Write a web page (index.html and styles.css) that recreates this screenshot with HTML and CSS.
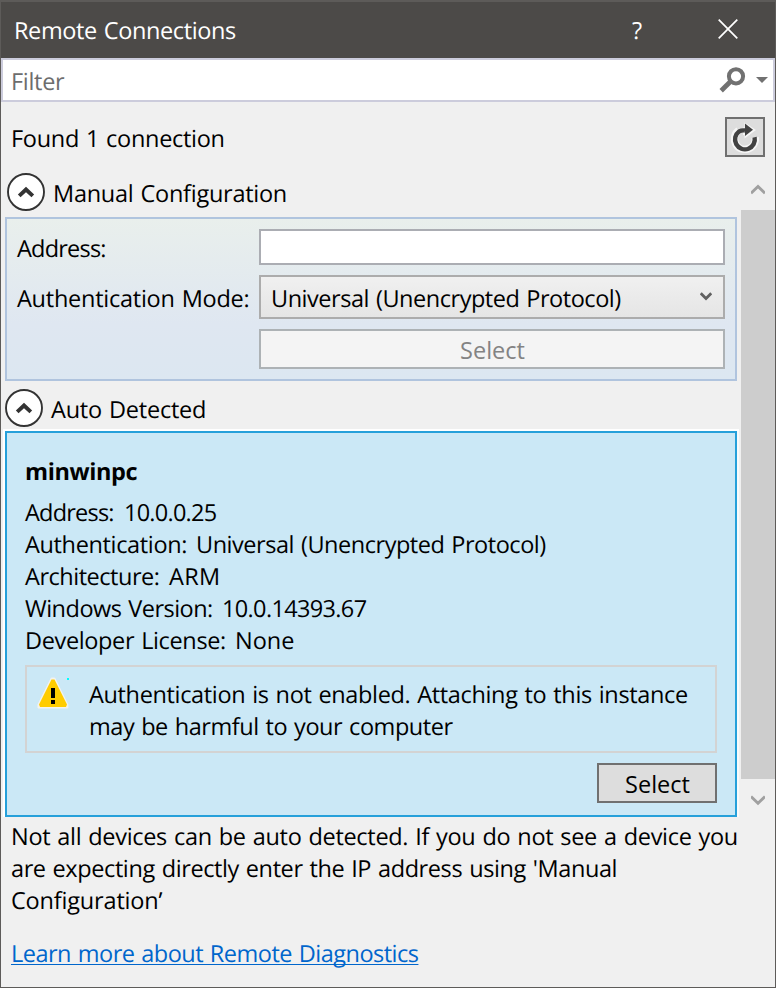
FILE: index.html
```html
<!DOCTYPE html>
<html lang="en">
<head>
<meta charset="utf-8">
<title>Remote Connections</title>
<link rel="stylesheet" href="styles.css">
</head>
<body>
<div class="window">
  <header class="titlebar">
    <h1 class="title">Remote Connections</h1>
    <span class="help">?</span>
    <svg class="close" width="20" height="20" viewBox="0 0 20 20"><path d="M.7.7 19.3 19.3M19.3.7.7 19.3" fill="none" stroke="#fff" stroke-width="1.7"/></svg>
  </header>

  <div class="filter">
    <span class="filter-text">Filter</span>
    <svg class="search" width="27" height="27" viewBox="0 0 27 27"><circle cx="17" cy="9.3" r="7.1" fill="none" stroke="#717171" stroke-width="4"/><path d="M12 14 2.2 23.7" stroke="#717171" stroke-width="4.8"/></svg>
    <svg class="drop" width="12" height="6" viewBox="0 0 12 6"><path d="M0 0h12L6 6z" fill="#717171"/></svg>
  </div>

  <div class="status">
    <span class="found">Found 1 connection</span>
    <button class="refresh" aria-label="Refresh">
      <svg width="36" height="36" viewBox="0 0 36 36">
        <path d="M11.6 11.6A10.4 10.4 0 1 0 28.2 18.5M16 12.2h7" fill="none" stroke="#f6f6f6" stroke-width="7.5"/>
        <path d="M17.5 3.5 29 11l-11.500 8.500z" fill="#f6f6f6"/>
        <path d="M18 11.500A9.800 9.800 0 0 0 12 12.500 9.900 9.900 0 1 0 27.600 18.300" fill="none" stroke="#424242" stroke-width="4.400"/>
        <path d="M18 4.600 26 10.800 18 17z" fill="#424242"/>
      </svg>
    </button>
  </div>

  <div class="scroller">
    <main class="content">
      <div class="group group-manual">
        <svg width="38" height="38" viewBox="0 0 38 38"><circle cx="19" cy="19" r="18" fill="#fff" stroke="#333" stroke-width="1.9"/><path d="m12.200 22.900 6.800-6.400 6.800 6.400" fill="none" stroke="#333" stroke-width="3.900"/></svg>
        <span class="manual-label">Manual Configuration</span>
      </div>
      <section class="form">
        <label class="l-address">Address:</label>
        <div class="input"></div>
        <label class="l-mode">Authentication Mode:</label>
        <div class="combo"><span>Universal (Unencrypted Protocol)</span><svg width="12" height="9" viewBox="0 0 12 9"><path d="m.8 1.300 5.200 5.200 5.200-5.200" fill="none" stroke="#606060" stroke-width="2.700"/></svg></div>
        <button class="button disabled">Select</button>
      </section>

      <div class="group group-auto">
        <svg width="38" height="38" viewBox="0 0 38 38"><circle cx="19" cy="19" r="18" fill="#fff" stroke="#333" stroke-width="1.9"/><path d="m12.200 22.900 6.800-6.400 6.800 6.400" fill="none" stroke="#333" stroke-width="3.900"/></svg>
        <span class="auto-label">Auto Detected</span>
      </div>
      <section class="device">
        <h2>minwinpc</h2>
        <div class="row"><span class="k-address">Address:</span><span class="v-address">10.0.0.25</span></div>
        <div class="row"><span class="k-auth">Authentication:</span><span class="v-auth">Universal (Unencrypted Protocol)</span></div>
        <div class="row"><span class="k-arch">Architecture:</span><span class="v-arch">ARM</span></div>
        <div class="row"><span class="k-version">Windows Version:</span><span class="v-version">10.0.14393.67</span></div>
        <div class="row"><span class="k-license">Developer License:</span><span class="v-license">None</span></div>
        <div class="warning">
          <svg width="33" height="33" viewBox="0 0 33 33">
            <path d="M14.200 1h3.600l13 26.500V31H1v-3.500z" fill="#f4f3ee" stroke="#f4f3ee" stroke-linejoin="round"/>
            <path d="M14.500 2.500h3L30 27.500 29 30H3l-1-2.500z" fill="#fc0"/>
            <path d="M14 11h4v10h-4zM14 23h4v4h-4z" fill="#000"/>
            <path d="M30 1h2v2h-2z" fill="#0ff"/>
          </svg>
          <p><span class="w1">Authentication is not enabled. Attaching to this instance</span><br><span class="w2">may be harmful to your computer</span></p>
        </div>
        <button class="button primary">Select</button>
      </section>
    </main>
    <div class="scrollbar">
      <svg width="14" height="12" viewBox="0 0 14 12"><path d="M0 10.300 7 3.500l7 6.800" fill="none" stroke="#a0a0a0" stroke-width="2.900"/></svg>
      <div class="thumb"></div>
      <svg width="14" height="12" viewBox="0 0 14 12"><path d="m0 2.500 7 6.800 7-6.800" fill="none" stroke="#a0a0a0" stroke-width="2.900"/></svg>
    </div>
  </div>

  <footer class="footer">
    <p><span class="f1">Not all devices can be auto detected. If you do not see a device you</span><br><span class="f2">are expecting directly enter the IP address using 'Manual</span><br><span class="f3">Configuration’</span></p>
    <a class="link" href="#">Learn more about Remote Diagnostics</a>
  </footer>
</div>
</body>
</html>
```
FILE: styles.css
```css
* { box-sizing: border-box; margin: 0; }
body {
  font: 23.5px/32px "Open Sans", "Noto Sans", sans-serif;
  color: #000;
  text-rendering: geometricPrecision;
  white-space: nowrap;
  word-spacing: 1.2px;
}
svg { display: block; flex: none; }
button { font: inherit; color: inherit; padding: 0; border-radius: 0; }

.window {
  width: 776px;
  height: 988px;
  background: #f0f0f0;
  border: 1px solid #5d5b59;
  border-top-width: 2px;
  overflow: hidden;
}

.titlebar {
  display: flex;
  height: 56px;
  padding: 12px 37px 0 13px;
  background: #4c4a48;
  color: #fff;
}
.title { flex: 1; font-size: inherit; font-weight: 400; letter-spacing: -0.38px; }
.help { width: 14px; margin-right: 72px; }
.close { margin-top: 5px; }

.filter {
  display: flex;
  height: 44px;
  padding: 5px 5px 0 8px;
  background: #fff;
  border: 2px solid #ccccdc;
}
.filter-text { flex: 1; color: #6d6d6d; letter-spacing: -0.3px; }
.search { margin: 2px 10px 0 0; }
.drop { margin-top: 12px; }

.status { display: flex; justify-content: space-between; height: 70px; padding: 15px 10px 0 10px; }
.found { margin-top: 5px; letter-spacing: -0.3px; }
.refresh { width: 40px; height: 40px; background: #ddd; border: 2px solid #707070; }

.scroller { display: flex; height: 646px; }
.content { width: 740px; padding-left: 4px; }
.group { display: flex; }
.group-manual { height: 45px; padding: 1px 0 0 2px; }
.group-auto { height: 50px; padding-top: 8px; }
.group span { margin: 4px 0 0 8px; }
.manual-label { letter-spacing: -0.26px; }
.auto-label { letter-spacing: -0.22px; }

.form {
  display: grid;
  grid-template-columns: 242px 466px;
  grid-template-rows: 36px 44px 40px;
  row-gap: 10px;
  width: 732px;
  height: 164px;
  padding: 10px 0 0 10px;
  border: 2px solid #b0c4de;
  background: linear-gradient(#e9efec, #dfe7f1 65%, #dce7f1);
}
.l-address { padding-top: 3px; letter-spacing: -0.78px; }
.l-mode { padding-top: 7px; letter-spacing: -0.25px; }
.input { background: #fff; border: 2px solid #abadb3; }
.combo {
  display: flex;
  justify-content: space-between;
  padding: 5px 11px 0 10px;
  border: 2px solid #acacac;
  background: linear-gradient(#f0f0f0, #e5e5e5);
  letter-spacing: -0.46px;
}
.combo svg { margin-top: 10px; }
.button { border: 2px solid #707070; background: #ddd; line-height: 32px; padding: 2px 0 0 1px; }
.disabled { grid-column: 2; color: #838383; border-color: #adb2b5; background: #f4f4f4; }

.device {
  width: 732px;
  height: 386px;
  padding: 22px 18px 0;
  background: #cbe8f6;
  border: 2px solid #26a0da;
  box-shadow: 0 -2px #fff, -2px 0 #fff, 2px 0 #fafafa, -2px -2px #fff, 2px -2px #fff;
}
.device h2 { margin-bottom: 9px; font-size: inherit; letter-spacing: -0.4px; }
.row { display: flex; }
.row span:first-child { flex: none; }
.k-address { width: 99px; letter-spacing: -0.78px; }
.v-address { letter-spacing: -0.75px; }
.k-auth { width: 171px; letter-spacing: -0.35px; }
.v-auth { letter-spacing: -0.46px; }
.k-arch { width: 144px; letter-spacing: -0.48px; }
.v-arch { letter-spacing: 0.3px; }
.k-version { width: 197px; letter-spacing: -0.51px; }
.v-version { letter-spacing: -0.65px; }
.k-license { width: 210px; letter-spacing: -0.36px; }
.warning {
  display: flex;
  height: 88px;
  margin-top: 9px;
  padding: 10px 10px 0;
  border: 2px solid #d3d3d3;
}
.warning p { margin: 1px 0 0 19px; }
.w1 { letter-spacing: -0.35px; }
.w2 { letter-spacing: -0.44px; }
.primary { display: block; width: 120px; height: 40px; margin: 10px 0 0 auto; }

.scrollbar { display: flex; flex-direction: column; align-items: center; width: 34px; padding-top: 11px; }
.thumb { width: 34px; height: 569px; margin: 15px 0; background: #cdcdcd; }

.footer { padding: 2px 0 0 10px; }
.f1 { letter-spacing: -0.31px; }
.f2 { letter-spacing: -0.4px; }
.f3 { letter-spacing: -0.18px; }
.link {
  display: block;
  width: max-content;
  margin-top: 21px;
  color: #06c;
  letter-spacing: -0.51px;
  text-decoration: underline;
  text-decoration-thickness: 1px;
  text-underline-offset: 2px;
  text-decoration-skip-ink: none;
}
```
